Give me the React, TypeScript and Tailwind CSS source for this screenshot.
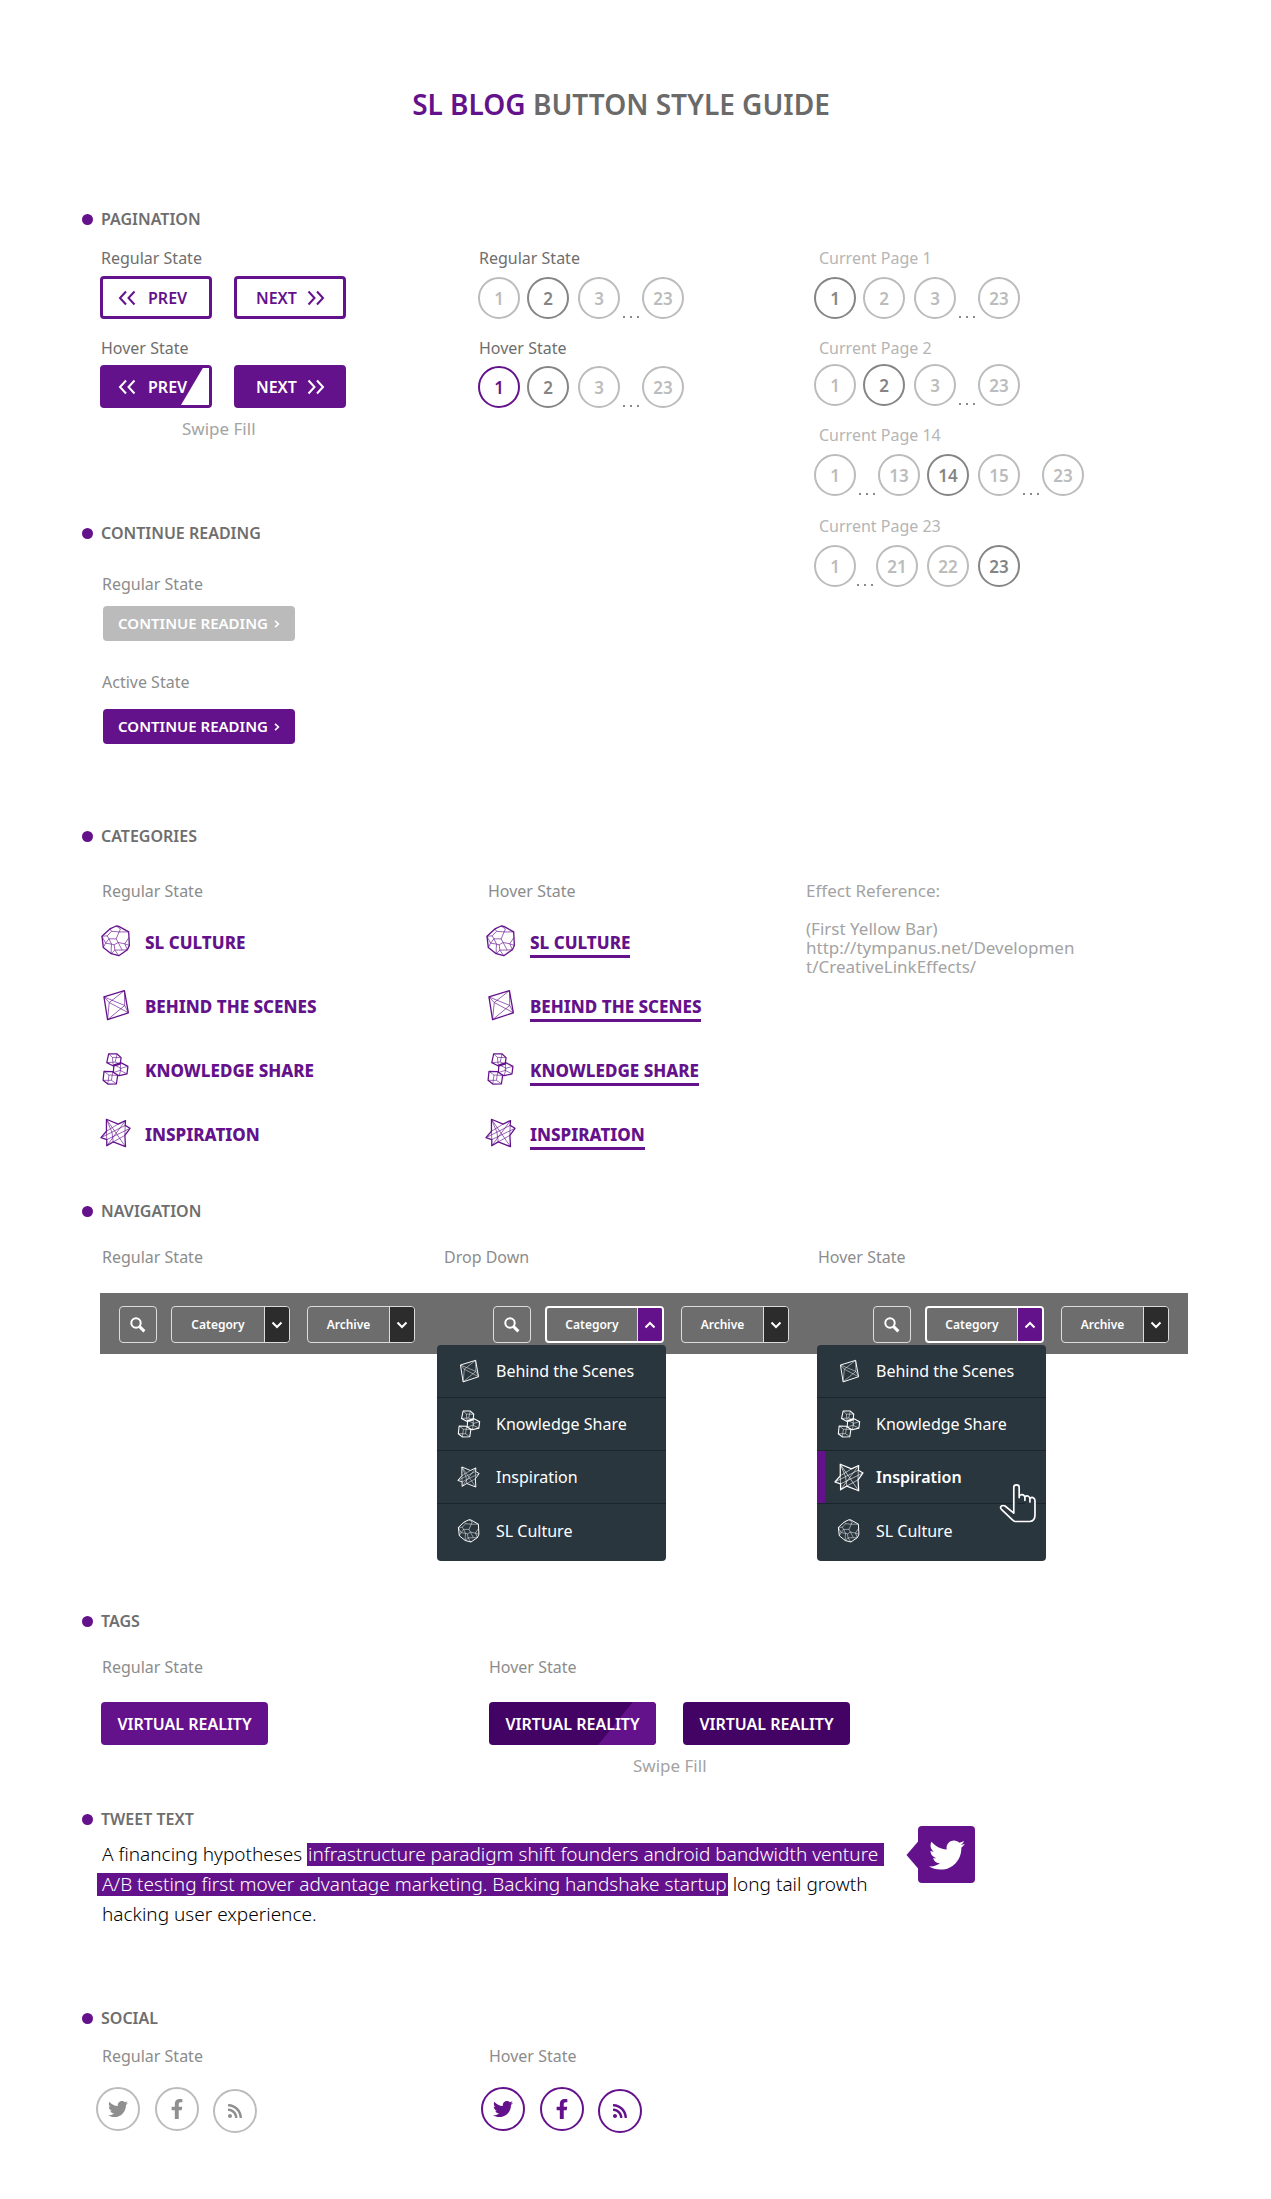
import React, { type ReactNode } from "react";
import { FaFacebookF, FaRss, FaTwitter } from "react-icons/fa";

type IconProps = { className?: string };

function Dodecahedron({ className = "" }: IconProps) {
  return (
    <svg viewBox="90 313 90 97" className={className} fill="none" stroke="currentColor" strokeLinejoin="round" aria-hidden="true">
      <path strokeWidth="4" d="M94 347 118 325 137 316 145 317 175 334 177 375 171 388 145 406 122 400 98 381Z" />
      <path
        strokeWidth="2"
        d="M118 325 123 332 110 346 94 347M123 332 146 334 175 334M137 316 150 325 146 334M110 346 115 355 137 355 146 334M115 355 105 368 98 381M105 368 94 347M115 355 123 371 122 384 122 400M105 368 123 371M137 355 143 366 131 373 123 371M143 366 163 370 177 375M163 370 171 388M163 370 175 352M131 373 133 389 145 406M133 389 122 400M133 389 155 389 171 388M143 366 155 389"
      />
    </svg>
  );
}

function Octahedron({ className = "" }: IconProps) {
  return (
    <svg viewBox="93 500 90 97" className={className} fill="none" stroke="currentColor" strokeLinejoin="round" aria-hidden="true">
      <path strokeWidth="4" d="M103 524 165 505 177 572 114 593Z" />
      <path strokeWidth="2" d="M103 524 119 541 165 505M119 541 114 593M119 541 177 572M103 524 166 550 165 505M166 550 177 572M166 550 114 593" />
    </svg>
  );
}

function Cubes({ className = "" }: IconProps) {
  return (
    <svg viewBox="98 685 90 103" className={className} fill="none" stroke="currentColor" strokeLinejoin="round" aria-hidden="true">
      <path strokeWidth="4" d="M121 688H148L161 700 158 721 136 727 115 716ZM138 723 160 716 183 728 180 752 155 758 136 748ZM106 744 134 745 150 757 146 784 118 785 103 773Z" />
      <path
        strokeWidth="2"
        d="M121 688 133 699 161 700M133 699 136 727M115 716 142 714 148 688M142 714 158 721M138 723 161 734 183 728M161 734 155 758M160 716 158 741 136 748M158 741 180 752M106 744 122 756 150 757M122 756 118 785M134 745 130 773 103 773M130 773 146 784"
      />
    </svg>
  );
}

function Star({ className = "" }: IconProps) {
  return (
    <svg viewBox="89 894 96 93" className={className} fill="none" stroke="currentColor" strokeLinejoin="round" aria-hidden="true">
      <path strokeWidth="4" d="M109 898 145 913 168 902 167 917 182 926 166 948 168 983 130 968 110 980 110 961 92 955 109 935Z" />
      <path strokeWidth="2" d="M109 898 168 983M168 902 110 980M92 955 167 917M110 961 182 926M109 898 126 938 130 968M145 913 109 935M166 948 130 968M167 917 166 948M109 935 110 961" />
    </svg>
  );
}

function SearchIcon() {
  return (
    <svg viewBox="0 0 16 16" className="size-4" fill="none" stroke="currentColor" aria-hidden="true">
      <circle cx="6" cy="6" r="4.7" strokeWidth="2" />
      <path d="M9.6 9.6 14.4 14.4" strokeWidth="3" />
    </svg>
  );
}

function Chevron({ up = false }: { up?: boolean }) {
  return (
    <svg viewBox="0 0 12 8" className="h-2 w-3" fill="none" stroke="currentColor" strokeWidth="2" aria-hidden="true">
      <path d={up ? "M1.5 6.5 6 2 10.5 6.5" : "M1.5 1.5 6 6 10.5 1.5"} />
    </svg>
  );
}

function DoubleChevron({ dir }: { dir: "left" | "right" }) {
  return (
    <svg viewBox="0 0 18 16" className="h-4 w-[18px]" fill="none" stroke="currentColor" strokeWidth="2" aria-hidden="true">
      <path d={dir === "left" ? "M8 1.5 2 8 8 14.5M16.5 1.5 10.5 8 16.5 14.5" : "M1.5 1.5 7.5 8 1.5 14.5M10 1.5 16 8 10 14.5"} />
    </svg>
  );
}

function HandCursor() {
  return (
    <svg viewBox="598 763 113 118" className="h-10 w-[38px]" stroke="white" strokeWidth="5" strokeLinejoin="round" strokeLinecap="round" aria-hidden="true">
      <path
        fill="#2a363e"
        d="M642 852V775Q642 768 650 768T658 775V806M658 803Q660 796 667 797 675 799 675 806V814M675 806Q677 799 684 801 690 803 690 810V819M690 810Q693 804 699 806 705 808 705 815V858Q705 876 690 877H646Q642 877 638 872L606 842Q600 836 605 831 610 828 616 831L642 852"
      />
    </svg>
  );
}

function SectionTitle({ children }: { children: ReactNode }) {
  return (
    <h2 className="-ml-[18px] flex h-6 items-center gap-2 text-base font-semibold text-[#6e6e6e]">
      <span className="size-[11px] rounded-full bg-[#64128c]" />
      {children}
    </h2>
  );
}

function Label({ children, className = "" }: { children: ReactNode; className?: string }) {
  return <p className={`pl-px text-base/5 ${className}`}>{children}</p>;
}

const pagerButton = "relative flex h-[43px] w-28 items-center rounded border-3 border-[#64128c] text-base font-semibold";

function PrevNext({ hover = false }: { hover?: boolean }) {
  const tone = hover ? "bg-[#64128c] text-white" : "bg-white text-[#64128c]";
  return (
    <div className="flex gap-[22px]">
      <button type="button" className={`${pagerButton} ${tone} gap-3 pl-[15px]`}>
        {hover && <span className="absolute inset-y-0 right-0 w-7 bg-white [clip-path:polygon(78%_0,100%_0,100%_100%,0_100%)]" />}
        <DoubleChevron dir="left" />
        <span className="relative">PREV</span>
      </button>
      <button type="button" className={`${pagerButton} ${tone} gap-[10px] pl-[19px]`}>
        NEXT
        <DoubleChevron dir="right" />
      </button>
    </div>
  );
}

type Page = { n: number; gap?: string; dots?: boolean };

function Pager({ pages, current, hovered }: { pages: Page[]; current: number; hovered?: number }) {
  return (
    <div className="flex">
      {pages.map(({ n, gap = "", dots }) => {
        const tone =
          n === hovered
            ? "border-[#64128c] text-[#64128c]"
            : n === current
              ? "border-[#858585] text-[#858585]"
              : "border-[#bcbcbc] text-[#bcbcbc]";
        return (
          <div key={n} className={`flex ${gap}`}>
            {dots && (
              <span className="flex w-[22px] items-end justify-center gap-[5px] pb-px">
                <i className="size-[2px] bg-[#8a8a8a]" />
                <i className="size-[2px] bg-[#8a8a8a]" />
                <i className="size-[2px] bg-[#8a8a8a]" />
              </span>
            )}
            <button type="button" className={`size-[42px] rounded-full border-2 text-center text-[17px] leading-none font-semibold ${tone}`}>
              {n}
            </button>
          </div>
        );
      })}
    </div>
  );
}

const firstPages: Page[] = [{ n: 1 }, { n: 2, gap: "ml-[7px]" }, { n: 3, gap: "ml-[9px]" }, { n: 23, dots: true }];
const middlePages: Page[] = [
  { n: 1 },
  { n: 13, dots: true },
  { n: 14, gap: "ml-[7px]" },
  { n: 15, gap: "ml-[9px]" },
  { n: 23, dots: true },
];
const lastPages: Page[] = [{ n: 1 }, { n: 21, dots: true, gap: "-ml-[2px]" }, { n: 22, gap: "ml-[9px]" }, { n: 23, gap: "ml-[9px]" }];

function ContinueButton({ className }: { className: string }) {
  return (
    <button type="button" className={`ml-[3px] flex h-[35px] w-48 items-center justify-center gap-[6px] rounded text-[15px] font-semibold text-white ${className}`}>
      CONTINUE READING
      <svg viewBox="0 0 6 8" className="h-2 w-[6px]" fill="none" stroke="currentColor" strokeWidth="1.6" aria-hidden="true">
        <path d="M1 .8 4.4 4 1 7.2" />
      </svg>
    </button>
  );
}

const categories = [
  { name: "SL CULTURE", Icon: Dodecahedron },
  { name: "BEHIND THE SCENES", Icon: Octahedron },
  { name: "KNOWLEDGE SHARE", Icon: Cubes },
  { name: "INSPIRATION", Icon: Star },
];

function CategoryList({ hover = false }: { hover?: boolean }) {
  return (
    <ul className="mt-[10px] text-[#64128c]">
      {categories.map(({ name, Icon }) => (
        <li key={name} className="flex h-16 items-center">
          <a href="#" className="flex items-center text-[17px]/6 font-extrabold">
            <Icon className="mr-[14px] mb-1 h-8 w-[31px]" />
            <span className={`mt-[3px] border-b-3 ${hover ? "border-[#64128c]" : "border-transparent"}`}>{name}</span>
          </a>
        </li>
      ))}
    </ul>
  );
}

const menuItems = [
  { name: "Behind the Scenes", Icon: Octahedron, size: "h-6 w-[22px]" },
  { name: "Knowledge Share", Icon: Cubes, size: "h-7 w-6" },
  { name: "Inspiration", Icon: Star, size: "h-[22px] w-[23px]" },
  { name: "SL Culture", Icon: Dodecahedron, size: "h-6 w-[23px]" },
];

function DropMenu({ active }: { active?: string }) {
  return (
    <ul className="absolute top-[39px] -left-[108px] z-10 h-[216px] w-[229px] divide-y-1 divide-[#1b252c] rounded bg-[#2a363e] text-white">
      {menuItems.map(({ name, Icon, size }) => {
        const on = name === active;
        return (
          <li key={name} className="relative h-[53px]">
            {on && <span className="absolute inset-y-0 left-0 w-2 bg-[#64128c]" />}
            <a href="#" className={`flex h-full items-center text-base ${on ? "font-semibold" : ""}`}>
              <span className="ml-[15px] flex w-[33px] justify-center">
                <Icon className={on ? "h-[29px] w-[30px]" : size} />
              </span>
              <span className="ml-[11px]">{name}</span>
            </a>
            {on && (
              <span className="absolute top-8 right-[9px] z-10">
                <HandCursor />
              </span>
            )}
          </li>
        );
      })}
    </ul>
  );
}

function NavGroup({ open = false, active }: { open?: boolean; active?: string }) {
  const menuButton = "flex h-[37px] overflow-hidden rounded text-[12px] font-semibold text-white";
  return (
    <div className="flex items-center gap-[14px] pl-[19px]">
      <button type="button" aria-label="Search" className="flex h-[37px] w-[38px] items-center justify-center rounded border border-[#dcdcdc] text-white">
        <SearchIcon />
      </button>
      <div className="relative mr-[3px]">
        <button type="button" aria-haspopup="menu" aria-expanded={open} className={`${menuButton} w-[119px] ${open ? "border-2 border-white" : "border border-[#dcdcdc]"}`}>
          <span className="flex flex-1 items-center justify-center self-stretch">Category</span>
          <span className={`flex w-[25px] items-center justify-center self-stretch border-l border-[#dcdcdc] ${open ? "bg-[#64128c]" : "bg-[#2c2c2c]"}`}>
            <Chevron up={open} />
          </span>
        </button>
        {open && <DropMenu active={active} />}
      </div>
      <button type="button" aria-haspopup="menu" aria-expanded={false} className={`${menuButton} w-[108px] border border-[#dcdcdc]`}>
        <span className="flex flex-1 items-center justify-center self-stretch">Archive</span>
        <span className="flex w-[25px] items-center justify-center self-stretch border-l border-[#dcdcdc] bg-[#2c2c2c]">
          <Chevron />
        </span>
      </button>
    </div>
  );
}

function Tag({ className, swipe = false }: { className: string; swipe?: boolean }) {
  return (
    <button type="button" className={`relative h-[43px] w-[167px] overflow-hidden rounded text-base font-semibold text-white ${className}`}>
      {swipe && <span className="absolute inset-y-0 right-0 w-[58px] bg-[#64128c] [clip-path:polygon(60%_0,100%_0,100%_100%,0_100%)]" />}
      <span className="relative">VIRTUAL REALITY</span>
    </button>
  );
}

function Social({ className, border }: { className: string; border: string }) {
  const circle = `flex size-11 items-center justify-center rounded-full border-2 ${border}`;
  return (
    <div className={`mt-[21px] flex gap-[15px] ${className}`}>
      <a href="#" aria-label="Twitter" className={circle}>
        <FaTwitter className="size-5" />
      </a>
      <a href="#" aria-label="Facebook" className={circle}>
        <FaFacebookF className="size-5" />
      </a>
      <a href="#" aria-label="RSS" className={`${circle} mt-[2px] -mb-[2px] -ml-px`}>
        <FaRss className="size-4" />
      </a>
    </div>
  );
}

export default function App() {
  return (
    <main className="min-h-screen bg-white pt-[86px] pr-[83px] pb-16 pl-[100px] font-['Noto_Sans',sans-serif] text-[#8c8c8c]">
      <h1 className="mr-[46px] text-center text-[28px]/9 font-semibold text-[#6a6a6a]">
        <span className="text-[#64128c]">SL BLOG</span> BUTTON STYLE GUIDE
      </h1>

      <div className="mt-[85px] grid grid-cols-[378fr_336fr_374fr]">
        <div>
          <section>
            <SectionTitle>PAGINATION</SectionTitle>
            <Label className="mt-[17px] mb-2 text-[#6e6e6e]">Regular State</Label>
            <PrevNext />
            <Label className="mt-[19px] mb-[7px] text-[#6e6e6e]">Hover State</Label>
            <PrevNext hover />
            <p className="mt-[11px] ml-[82px] text-[17px]/5 text-[#a3a3a3]">Swipe Fill</p>
          </section>
          <section className="mt-[82px]">
            <SectionTitle>CONTINUE READING</SectionTitle>
            <Label className="mt-[29px] mb-3 ml-px">Regular State</Label>
            <ContinueButton className="bg-[#bbbbbb]" />
            <Label className="mt-[31px] mb-[17px] ml-px">Active State</Label>
            <ContinueButton className="bg-[#64128c]" />
          </section>
        </div>
        <div className="pt-[41px]">
          <Label className="mb-[9px] text-[#6e6e6e]">Regular State</Label>
          <Pager pages={firstPages} current={2} />
          <Label className="mt-[19px] mb-2 text-[#6e6e6e]">Hover State</Label>
          <Pager pages={firstPages} current={2} hovered={1} />
        </div>
        <div className="pt-[41px] text-[#b5b5b5]">
          <Label className="mb-[9px] ml-1">Current Page 1</Label>
          <Pager pages={firstPages} current={1} />
          <Label className="mt-[19px] mb-[6px] ml-1">Current Page 2</Label>
          <Pager pages={firstPages} current={2} />
          <Label className="mt-[19px] mb-[9px] ml-1">Current Page 14</Label>
          <Pager pages={middlePages} current={14} />
          <Label className="mt-5 mb-[9px] ml-1">Current Page 23</Label>
          <Pager pages={lastPages} current={23} />
        </div>
      </div>

      <section className="mt-20">
        <SectionTitle>CATEGORIES</SectionTitle>
        <div className="mt-[33px] grid grid-cols-[385fr_321fr_382fr]">
          <div>
            <Label className="ml-px">Regular State</Label>
            <CategoryList />
          </div>
          <div>
            <Label className="ml-[2px]">Hover State</Label>
            <CategoryList hover />
          </div>
          <p className="w-[280px] text-[17px]/[19px] break-all text-[#a3a3a3]">
            Effect Reference:
            <br />
            <br />
            (First Yellow Bar)
            <br />
            http://tympanus.net/Development/CreativeLinkEffects/
          </p>
        </div>
      </section>

      <section className="mt-8">
        <SectionTitle>NAVIGATION</SectionTitle>
        <div className="mt-6 grid grid-cols-[343fr_374fr_371fr]">
          <Label className="ml-px">Regular State</Label>
          <Label>Drop Down</Label>
          <Label>Hover State</Label>
        </div>
        <nav className="mt-[26px] mb-[255px] grid h-[61px] grid-cols-[374fr_380fr_334fr] bg-[#6d6d6d] pt-[2px]">
          <NavGroup />
          <NavGroup open />
          <NavGroup open active="Inspiration" />
        </nav>
      </section>

      <section>
        <SectionTitle>TAGS</SectionTitle>
        <div className="mt-6 grid grid-cols-[388fr_700fr]">
          <div>
            <Label className="mb-[25px] ml-px">Regular State</Label>
            <Tag className="ml-px bg-[#64128c]" />
          </div>
          <div>
            <Label className="mb-[25px]">Hover State</Label>
            <div className="flex gap-[27px]">
              <Tag className="ml-px bg-[#430364]" swipe />
              <Tag className="bg-[#430364]" />
            </div>
            <p className="mt-[11px] ml-[145px] text-[17px]/5 text-[#a3a3a3]">Swipe Fill</p>
          </div>
        </div>
      </section>

      <section className="mt-[31px]">
        <SectionTitle>TWEET TEXT</SectionTitle>
        <div className="flex items-start gap-[22px]">
          <p className="mt-2 ml-[2px] text-[19px]/[30px] font-light whitespace-nowrap text-black">
            <span className="block">
              A financing hypotheses{" "}
              <mark className="inline-block bg-[#64128c] pr-[6px] pl-px leading-[23px] text-white">
                infrastructure paradigm shift founders android bandwidth venture
              </mark>
            </span>
            <span className="block">
              <mark className="-ml-[5px] inline-block bg-[#64128c] pr-px pl-[5px] leading-[23px] text-white">
                A/B testing first mover advantage marketing. Backing handshake startup
              </mark>{" "}
              long tail growth
            </span>
            <span className="block">hacking user experience.</span>
          </p>
          <a href="#" aria-label="Tweet this" className="-mt-[5px] flex items-center text-[#64128c]">
            <svg viewBox="0 0 12 28" className="-mr-px h-7 w-[13px]" fill="currentColor" aria-hidden="true">
              <path d="M12 0V28L0 14Z" />
            </svg>
            <span className="flex size-[57px] items-center justify-center rounded bg-[#64128c]">
              <FaTwitter className="size-9 text-white" />
            </span>
          </a>
        </div>
      </section>

      <section className="mt-[77px]">
        <SectionTitle>SOCIAL</SectionTitle>
        <div className="mt-4 grid grid-cols-[388fr_700fr]">
          <div>
            <Label className="ml-px">Regular State</Label>
            <Social className="-ml-1 text-[#8f8f8f]" border="border-[#bcbcbc]" />
          </div>
          <div>
            <Label>Hover State</Label>
            <Social className="-ml-[7px] text-[#64128c]" border="border-[#64128c]" />
          </div>
        </div>
      </section>
    </main>
  );
}
